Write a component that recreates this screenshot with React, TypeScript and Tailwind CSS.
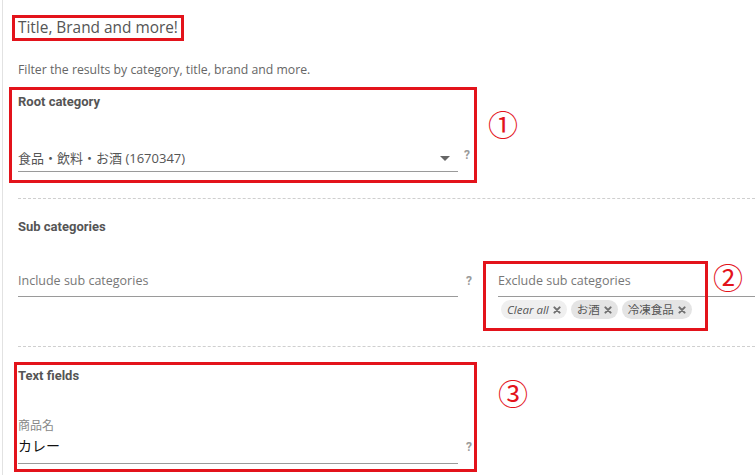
import type { ReactNode } from "react";

const sans = "font-['Open_Sans','Noto_Sans_CJK_JP',sans-serif]";
const bold = "font-['Roboto','Noto_Sans_CJK_JP',sans-serif] font-bold";

const Help = () => (
  <div className={`${bold} text-[12px] leading-[14px] text-[#9a9a9a]`}>?</div>
);

const Chip = ({ children, italic }: { children: ReactNode; italic?: boolean }) => (
  <span
    className={`flex items-center gap-[4px] h-[19px] px-[6px] rounded-full leading-[19px] text-[#555] ${
      italic ? "italic text-[11.5px] bg-[#efefef]" : "text-[11.5px] bg-[#e4e4e4]"
    }`}
  >
    {children}
    <svg width="8" height="8" viewBox="0 0 8 8" className="mt-[1px]">
      <path d="M1.4 1.4 L6.6 6.6 M6.6 1.4 L1.4 6.6" stroke="#707070" strokeWidth="2" strokeLinecap="round" />
    </svg>
  </span>
);

// annotation boxes and numbers drawn over the captured page
const Mark = ({ className }: { className: string }) => (
  <div className={`absolute border-[3px] border-[#e3131b] pointer-events-none ${className}`} />
);

const Num = ({ children, className }: { children: ReactNode; className: string }) => (
  <span
    className={`absolute font-['Noto_Sans_CJK_JP',sans-serif] text-[30px] leading-[30px] text-[#e3131b] ${className}`}
  >
    {children}
  </span>
);

export default function App() {
  return (
    <div className={`relative w-[755px] h-[475px] overflow-hidden bg-white ${sans}`}>
      <div className="ml-[2px] h-full border-l border-[#e2e2e2] pl-[15px]">
        <p className="pt-[18px] text-[15.4px] leading-[20px] text-[#555]">Title, Brand and more!</p>
        <p className="mt-[24px] text-[12.25px] leading-[16px] text-[#666]">
          Filter the results by category, title, brand and more.
        </p>

        {/* root category */}
        <p className={`mt-[16px] ${bold} text-[13px] leading-[16px] text-[#555]`}>Root category</p>
        <div className="mt-[39px] flex items-start">
          <div className="w-[440px] flex items-center justify-between pb-[4px] border-b border-[#9a9a9a]">
            <span className="text-[13px] leading-[18px] text-[#555]">食品・飲料・お酒 (1670347)</span>
            <span className="mr-[8px] w-0 h-0 border-x-[5px] border-x-transparent border-t-[5px] border-t-[#666]" />
          </div>
          <div className="ml-[6px] -mt-[1px]">
            <Help />
          </div>
        </div>

        <div className="mt-[26px] border-t border-dashed border-[#cfcfcf]" />

        {/* sub categories */}
        <p className={`mt-[20px] ${bold} text-[13px] leading-[16px] text-[#555]`}>Sub categories</p>
        <div className="mt-[37px] flex items-start">
          <div className="w-[440px] pb-[6px] border-b border-[#9a9a9a] text-[12.5px] leading-[18px] text-[#777]">
            Include sub categories
          </div>
          <div className="ml-[8px] mt-[2px]">
            <Help />
          </div>
          <div className="ml-[26px] flex-1">
            <div className="pb-[6px] border-b border-[#9a9a9a] text-[12.5px] leading-[18px] text-[#777]">
              Exclude sub categories
            </div>
            <div className="mt-[3px] ml-[3px] flex gap-[4px]">
              <Chip italic>Clear all</Chip>
              <Chip>お酒</Chip>
              <Chip>冷凍食品</Chip>
            </div>
          </div>
        </div>

        <div className="mt-[27px] border-t border-dashed border-[#cfcfcf]" />

        {/* text fields */}
        <p className={`mt-[21px] ${bold} text-[13px] leading-[16px] text-[#555]`}>Text fields</p>
        <p className="mt-[34px] text-[12px] leading-[16px] text-[#888]">商品名</p>
        <div className="mt-[2px] flex items-start">
          <div className="w-[440px] pb-[7px] border-b border-[#9a9a9a] text-[14px] leading-[20px] text-[#111]">
            カレー
          </div>
          <div className="ml-[8px] mt-[4px]">
            <Help />
          </div>
        </div>
      </div>

      <Mark className="left-[12px] top-[15px] w-[172px] h-[26px]" />
      <Mark className="left-[9px] top-[87px] w-[468px] h-[96px]" />
      <Mark className="left-[483px] top-[261px] w-[225px] h-[70px]" />
      <Mark className="left-[14px] top-[362px] w-[463px] h-[110px]" />
      <Num className="left-[488px] top-[108px]">①</Num>
      <Num className="left-[713px] top-[261px]">②</Num>
      <Num className="left-[498px] top-[377px]">③</Num>
    </div>
  );
}
